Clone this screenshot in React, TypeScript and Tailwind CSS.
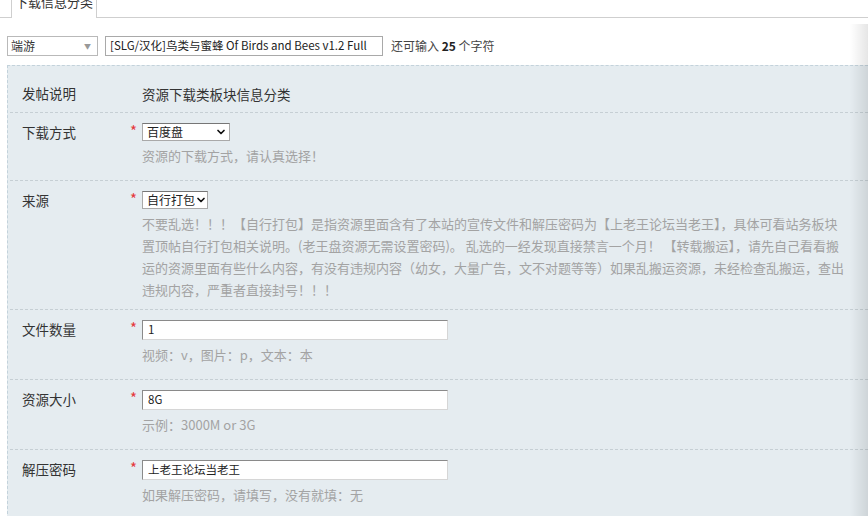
import { ChevronDown } from "lucide-react";

const FONT = { fontFamily: '"Noto Sans CJK SC", "Noto Sans", sans-serif' };

function NativeSelect({ value, width }: { value: string; width: string }) {
  return (
    <div
      className={`flex h-[18px] items-center justify-between whitespace-nowrap border border-[#a9a9a9] border-t-[#767676] bg-white pl-[4px] pr-[2px] text-[12px] leading-none text-[#222] ${width}`}
    >
      <span>{value}</span>
      <ChevronDown className="h-[12px] w-[12px] shrink-0 text-[#111]" strokeWidth={3.4} />
    </div>
  );
}

function TextInput({ value }: { value: string }) {
  return (
    <div className="flex h-[20px] w-[306px] items-center border border-[#d6d6d6] border-l-[#8a8a8a] border-t-[#8a8a8a] bg-white px-[5px] text-[11.5px] leading-none text-[#222]">
      {value}
    </div>
  );
}

function Row({
  label,
  required = true,
  first = false,
  tight = false,
  children,
  help,
}: {
  label: string;
  required?: boolean;
  first?: boolean;
  tight?: boolean;
  children: React.ReactNode;
  help?: React.ReactNode;
}) {
  const pad = first
    ? "pt-[18px] pb-[8px]"
    : `border-t border-dashed border-[#c6cfd4] pt-[10px] ${tight ? "pb-[8px]" : "pb-[13px]"}`;
  return (
    <div className={`ml-[2px] flex ${pad}`}>
      <div className="w-[119px] shrink-0 pl-[12px] text-[13.5px] leading-[18px] text-[#333]">
        {label}
      </div>
      <div className="w-[13px] shrink-0 pl-[1px] text-[15px] leading-[16px] text-[#e4393c]">
        {required ? "*" : ""}
      </div>
      <div className="min-w-0 flex-1">
        {children}
        {help && (
          <div className="mt-[4px] whitespace-nowrap text-[13px] leading-[22px] text-[#a3a3a3]">
            {help}
          </div>
        )}
      </div>
    </div>
  );
}

export default function App() {
  return (
    <div className="relative flex h-[516px] w-[868px] flex-col overflow-hidden bg-white" style={FONT}>
      {/* tab bar */}
      <div className="relative h-[18px] shrink-0 border-b border-[#cfcfcf]">
        <div className="absolute left-[11px] top-[-8px] h-[26px] w-[86px] border-x border-[#cfcfcf] bg-white text-center text-[13px] leading-[20px] text-[#333]">
          下载信息分类
        </div>
      </div>

      {/* 标题行 */}
      <div className="mt-[18px] flex shrink-0 items-center pl-[7px]">
        <div className="flex h-[20px] w-[91px] items-center justify-between border border-[#b9b9b9] bg-white pl-[3px] pr-[6px] text-[12px] text-[#333]">
          <span>端游</span>
          <span className="text-[7px] text-[#999]">▼</span>
        </div>
        <div className="ml-[7px] flex h-[20px] w-[278px] items-center border border-[#a9a9a9] bg-white px-[4px] text-[11.5px] text-[#222]">
          [SLG/汉化]鸟类与蜜蜂 Of Birds and Bees v1.2 Full
        </div>
        <div className="ml-[8px] text-[12px] text-[#444]">
          还可输入 <b className="font-bold text-[#222]">25</b> 个字符
        </div>
      </div>

      {/* 分类信息面板 */}
      <div className="ml-[7px] mt-[9px] flex-1 shrink-0 border-l border-t border-dashed border-[#c3d2db] bg-[#e5ecf0]">
        <Row label="发帖说明" required={false} first>
          <div className="text-[13.5px] leading-[20px] text-[#333]">资源下载类板块信息分类</div>
        </Row>

        <Row label="下载方式" help="资源的下载方式，请认真选择！">
          <NativeSelect value="百度盘" width="w-[88px]" />
        </Row>

        <Row
          label="来源"
          tight
          help={
            <>
              不要乱选！！！【自行打包】是指资源里面含有了本站的宣传文件和解压密码为【上老王论坛当老王】，具体可看站务板块
              <br />
              置顶帖自行打包相关说明。(老王盘资源无需设置密码)。 乱选的一经发现直接禁言一个月！ 【转载搬运】，请先自己看看搬
              <br />
              运的资源里面有些什么内容，有没有违规内容（幼女，大量广告，文不对题等等）如果乱搬运资源，未经检查乱搬运，查出
              <br />
              违规内容，严重者直接封号！！！
            </>
          }
        >
          <NativeSelect value="自行打包" width="w-[66px]" />
        </Row>

        <Row label="文件数量" help="视频：v，图片：p，文本：本">
          <TextInput value="1" />
        </Row>

        <Row label="资源大小" help="示例：3000M or 3G">
          <TextInput value="8G" />
        </Row>

        <Row label="解压密码" help="如果解压密码，请填写，没有就填：无">
          <TextInput value="上老王论坛当老王" />
        </Row>
      </div>

      {/* 右侧阴影 */}
      <div className="pointer-events-none absolute bottom-0 right-0 top-[24px] w-[18px] bg-gradient-to-r from-transparent to-black/10" />
    </div>
  );
}
